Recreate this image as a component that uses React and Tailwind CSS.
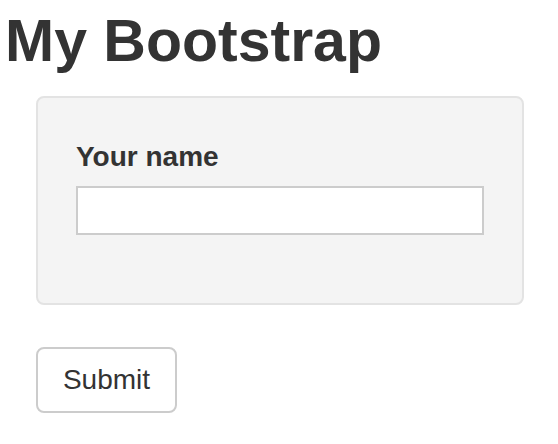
import React, { useState } from "react";

export default function App() {
  const [name, setName] = useState("");

  return (
    <div className="min-h-[444px] bg-white text-[#333] font-['Liberation_Sans',Arial,sans-serif]">
      <h1 className="pl-[5px] pt-[9px] text-[59px] leading-[64px] font-bold">My Bootstrap</h1>

      <form className="ml-[36px] mt-[23px] w-[488px]" onSubmit={(e) => e.preventDefault()}>
        <div className="h-[209px] rounded-[8px] border-2 border-[#e3e3e3] bg-[#f4f4f4] px-[38px] pt-[43px]">
          <label htmlFor="name" className="block text-[28px] leading-[32px] font-bold">Your name</label>
          <input
            id="name"
            value={name}
            onChange={(e) => setName(e.target.value)}
            className="mt-[13px] block h-[49px] w-full border-2 border-[#ccc] bg-white px-3 text-[28px] outline-none"
          />
        </div>

        <button
          type="submit"
          className="mt-[42px] h-[66px] w-[141px] rounded-[8px] border-2 border-[#ccc] bg-white text-[28px] leading-none"
        >
          Submit
        </button>
      </form>
    </div>
  );
}
